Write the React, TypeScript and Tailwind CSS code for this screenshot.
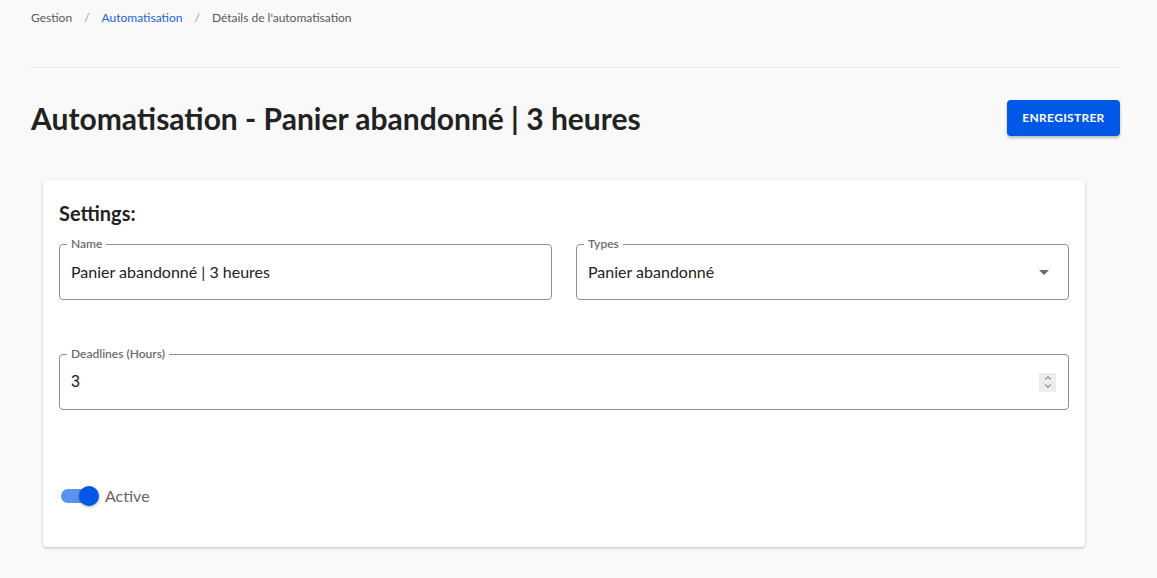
import { ChevronDown, ChevronUp } from 'lucide-react'

const font = { fontFamily: 'Lato, "Noto Sans", sans-serif' }

const Field = ({ label, children, className = '' }: { label: string; children: React.ReactNode; className?: string }) => (
  <div className={`relative h-[56px] rounded-[4px] border border-[#8f8f8f] flex items-center pl-[11px] pr-[12px] ${className}`}>
    <span className="absolute -top-[8px] left-[7px] bg-white px-[4px] text-[12px] leading-[14px] font-semibold text-[#6b6b6b]">
      {label}
    </span>
    {children}
  </div>
)

export default function App() {
  return (
    <div className="min-h-screen bg-[#f9f9f9] pl-[31px] pr-[37px] pt-[10px] text-[#222]" style={font}>
      <nav className="flex items-center h-[16px] text-[12px] text-[#5a5a5a]">
        <span>Gestion</span>
        <span className="mx-[12px] text-[#9a9a9a]">/</span>
        <span className="text-[#1f63e0]">Automatisation</span>
        <span className="mx-[12px] text-[#9a9a9a]">/</span>
        <span>Détails de l'automatisation</span>
      </nav>

      <div className="mt-[41px] border-t border-[#e9e9e9]" />

      <div className="mt-[30px] flex items-center justify-between">
        <h1 className="text-[30px] leading-[40px] font-bold text-[#222]">Automatisation - Panier abandonné | 3 heures</h1>
        <button className="h-[36px] w-[113px] rounded-[4px] bg-[#0158e6] text-white text-[12px] font-bold tracking-[0.3px] shadow-[0_2px_3px_rgba(0,0,0,0.25)]">
          ENREGISTRER
        </button>
      </div>

      <div className="mt-[42px] ml-[12px] w-[1042px] rounded-[4px] bg-white shadow-[0_1px_3px_rgba(0,0,0,0.25)] px-[16px] pt-[20px] pb-[39px]">
        <h2 className="text-[20px] leading-[26px] font-bold text-[#222]">Settings:</h2>

        <div className="mt-[18px] grid grid-cols-2 gap-x-[24px]">
          <Field label="Name">
            <span className="text-[16px]">Panier abandonné | 3 heures</span>
          </Field>
          <Field label="Types" className="justify-between">
            <span className="text-[16px]">Panier abandonné</span>
            <svg width="10" height="5" viewBox="0 0 10 5" className="mr-[7px]">
              <path d="M0 0 L10 0 L5 5 Z" fill="#6b6b6b" />
            </svg>
          </Field>
        </div>

        <Field label="Deadlines (Hours)" className="mt-[54px] justify-between">
          <span className="text-[16px]" style={{ fontFamily: '"Liberation Sans", Arial, sans-serif' }}>3</span>
          <span className="flex flex-col items-center justify-center w-[17px] h-[19px] bg-[#ececec] text-[#6e6e6e]">
            <ChevronUp size={10} strokeWidth={2.5} className="-mb-[2px]" />
            <ChevronDown size={10} strokeWidth={2.5} />
          </span>
        </Field>

        <div className="mt-[74px] flex items-center">
          <div className="relative w-[38px] h-[22px] flex items-center ml-[2px]">
            <div className="w-[36px] h-[14px] rounded-full bg-[#5b92ec]" />
            <div className="absolute left-[18px] top-[1px] w-[20px] h-[20px] rounded-full bg-[#0158e6] shadow-[0_1px_3px_rgba(0,0,0,0.35)]" />
          </div>
          <span className="ml-[6px] text-[16px] text-[#666]">Active</span>
        </div>
      </div>
    </div>
  )
}
